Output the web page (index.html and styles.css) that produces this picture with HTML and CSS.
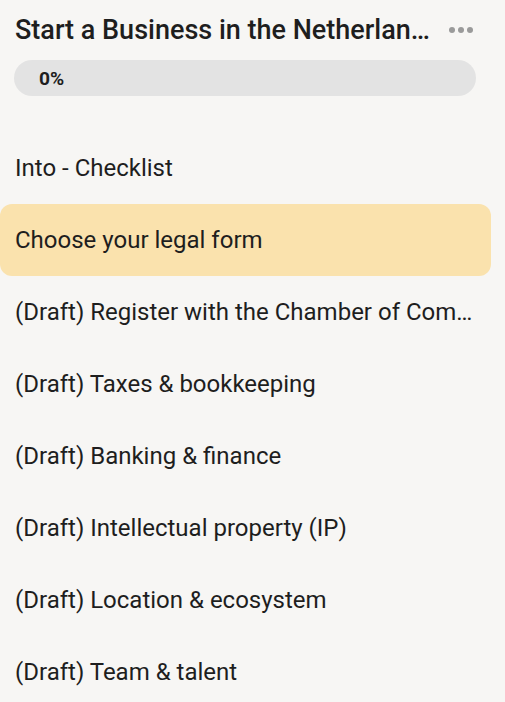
FILE: index.html
```html
<!DOCTYPE html>
<html lang="en">
<head>
<meta charset="utf-8">
<link rel="stylesheet" href="styles.css">
</head>
<body>
<div class="panel">
  <div class="header">
    <h1 class="title">Start a Business in the Netherlands</h1>
    <button class="more" aria-label="More options">
      <svg width="24" height="6" viewBox="0 0 24 6"><circle cx="3" cy="3" r="3"/><circle cx="12" cy="3" r="3"/><circle cx="21" cy="3" r="3"/></svg>
    </button>
  </div>
  <div class="progress"><span class="progress-label">0%</span></div>
  <ul class="steps">
    <li class="step">Into - Checklist</li>
    <li class="step active">Choose your legal form</li>
    <li class="step">(Draft) Register with the Chamber of Commerce (KVK)</li>
    <li class="step">(Draft) Taxes &amp; bookkeeping</li>
    <li class="step">(Draft) Banking &amp; finance</li>
    <li class="step">(Draft) Intellectual property (IP)</li>
    <li class="step">(Draft) Location &amp; ecosystem</li>
    <li class="step">(Draft) Team &amp; talent</li>
  </ul>
</div>
</body>
</html>
```
FILE: styles.css
```css
html, body {
  margin: 0;
  padding: 0;
  background: #f7f6f4;
  font-family: Roboto, "Liberation Sans", sans-serif;
  color: #1e1e1e;
  overflow: hidden;
}
.panel {
  width: 491px;
}
.header {
  display: flex;
  align-items: center;
  gap: 16px;
  padding: 16px 18px 0 15px;
  height: 28px;
}
.title {
  flex: 1;
  min-width: 0;
  margin: 0;
  font-size: 27px;
  font-weight: 500;
  line-height: 28px;
  white-space: nowrap;
  overflow: hidden;
  text-overflow: ellipsis;
}
.more {
  flex: none;
  border: 0;
  background: none;
  padding: 0;
  display: flex;
  fill: #9a9a9a;
}
.progress {
  margin: 16px 15px 0 14px;
  height: 36px;
  border-radius: 18px;
  background: #e3e3e3;
  display: flex;
  align-items: center;
  padding-left: 25px;
}
.progress-label {
  font-size: 19.2px;
  font-weight: 700;
}
.steps {
  list-style: none;
  margin: 36px 0 0;
  padding: 0;
}
.step {
  height: 72px;
  line-height: 72px;
  padding: 0 12px 0 15px;
  font-size: 24px;
  white-space: nowrap;
  overflow: hidden;
  text-overflow: ellipsis;
  border-radius: 12px;
}
.step.active {
  background: #fae2ad;
}
```
